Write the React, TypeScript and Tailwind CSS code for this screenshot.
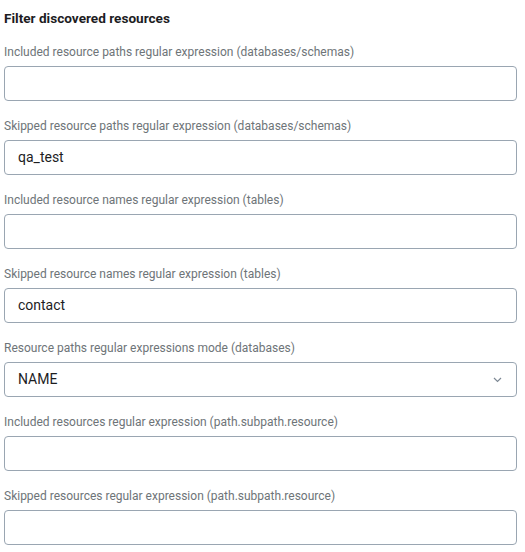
import React from "react";

const fields: { label: string; value?: string; select?: boolean }[] = [
  { label: "Included resource paths regular expression (databases/schemas)" },
  { label: "Skipped resource paths regular expression (databases/schemas)", value: "qa_test" },
  { label: "Included resource names regular expression (tables)" },
  { label: "Skipped resource names regular expression (tables)", value: "contact" },
  { label: "Resource paths regular expressions mode (databases)", value: "NAME", select: true },
  { label: "Included resources regular expression (path.subpath.resource)" },
  { label: "Skipped resources regular expression (path.subpath.resource)" },
];

const App = () => {
  return (
    <div className="min-h-[552px] w-[525px] bg-white px-1 pt-[10px] font-['Roboto',sans-serif]">
      {/* Header */}
      <h2 className="text-[13.6px] font-bold leading-4 text-[#1d1d1f]">Filter discovered resources</h2>

      <div className="mt-[19px] flex flex-col gap-[18px] pr-[4px]">
        {fields.map((f) => (
          <div key={f.label} className="flex flex-col gap-[7px]">
            <label className="text-[12px] leading-[14px] text-[#6e7478]">{f.label}</label>
            <div className="flex h-[35px] items-center justify-between rounded-[4px] border border-[#9aa6b2] bg-white px-[13px] text-[14px] text-[#1d1d1f]">
              <span>{f.value ?? ""}</span>
              {f.select ? (
                <svg width="9" height="6" viewBox="0 0 9 6" className="mr-[1px]">
                  <path d="M1 1l3.5 3.5L8 1" fill="none" stroke="#7d8894" strokeWidth="1.2" />
                </svg>
              ) : undefined}
            </div>
          </div>
        ))}
      </div>
    </div>
  );
};

export default App;
